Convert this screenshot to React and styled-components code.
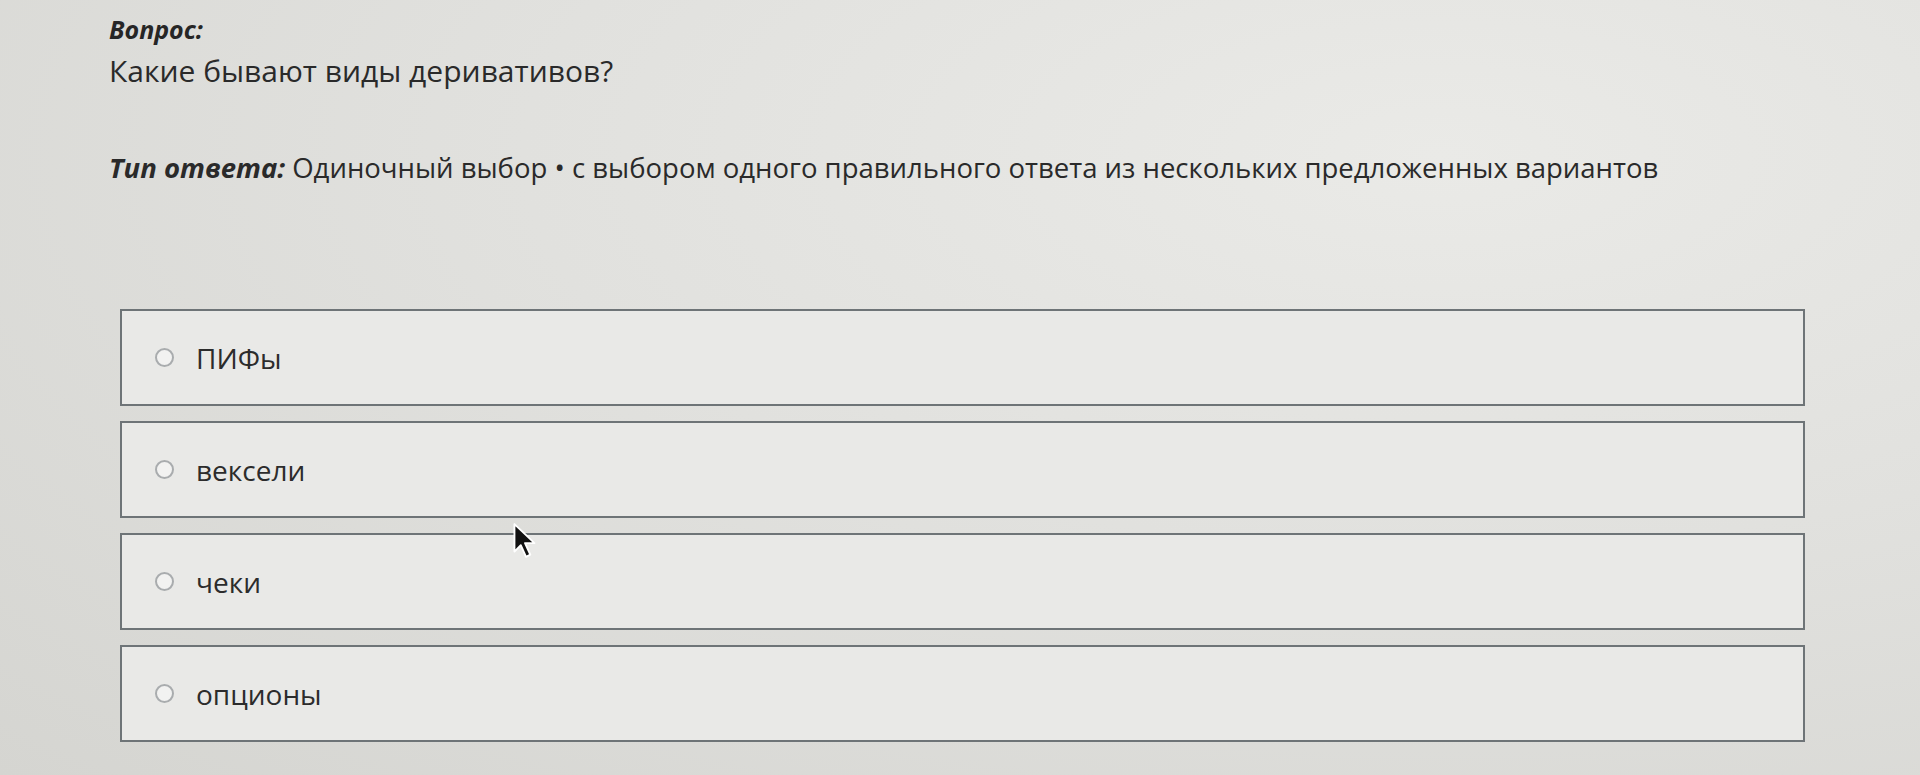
import React from "react";
import styled, { createGlobalStyle } from "styled-components";

const Global = createGlobalStyle`
  html, body { margin: 0; padding: 0; }
  body {
    width: 1920px;
    height: 775px;
    overflow: hidden;
    background: radial-gradient(ellipse at 75% 20%, #eaeae7 0%, #e1e1de 45%, #d5d5d1 100%);
    font-family: "Open Sans", "Noto Sans", sans-serif;
    color: #2b2b2b;
  }
`;

const Page = styled.div`
  position: relative;
  width: 1920px;
  height: 775px;
  box-sizing: border-box;
  padding: 10px 0 0 109px;
`;

const Label = styled.div`
  font-size: 25px;
  font-weight: 700;
  font-style: italic;
  line-height: 38px;
  color: #262626;
`;

const Question = styled.div`
  font-size: 30px;
  line-height: 46px;
  color: #2a2a2a;
`;

const TypeLine = styled.div`
  margin-top: 54px;
  font-size: 27.5px;
  line-height: 40px;
  color: #2a2a2a;
`;

const TypeLabel = styled.span`
  font-weight: 700;
  font-style: italic;
`;

const Options = styled.div`
  margin: 121px 0 0 11px;
  width: 1685px;
  display: flex;
  flex-direction: column;
  gap: 15px;
`;

const Option = styled.label`
  height: 97px;
  box-sizing: border-box;
  border: 2px solid #6e7477;
  background: #e9e9e7;
  display: flex;
  align-items: center;
  padding-left: 33px;
  gap: 22px;
  cursor: pointer;
`;

const Radio = styled.span`
  width: 19px;
  height: 19px;
  border-radius: 50%;
  border: 2px solid #a9acae;
  background: #f2f2f1;
  box-sizing: border-box;
  flex: none;
`;

const OptionText = styled.span`
  font-size: 28px;
  color: #2c2c2c;
`;

const Cursor = styled.svg`
  position: absolute;
  left: 512px;
  top: 522px;
  width: 26px;
  height: 38px;
`;

const items = ["ПИФы", "векселиXX".slice(0, 7), "чеки", "опционы"];

export default function App() {
  return (
    <>
      <Global />
      <Page>
        <Label>Вопрос:</Label>
        <Question>Какие бывают виды деривативов?</Question>
        <TypeLine>
          <TypeLabel>Тип ответа:</TypeLabel> Одиночный выбор • с выбором одного правильного ответа из нескольких предложенных вариантов
        </TypeLine>
        <Options>
          {items.map((t) => (
            <Option key={t}>
              <Radio />
              <OptionText>{t}</OptionText>
            </Option>
          ))}
        </Options>
        <Cursor viewBox="0 0 12 18">
          <path d="M1 1 L1 14 L4 11 L6.5 16.5 L8.5 15.5 L6 10 L10.5 10 Z" fill="#111" stroke="#fff" strokeWidth="0.9" strokeLinejoin="round" />
        </Cursor>
      </Page>
    </>
  );
}
